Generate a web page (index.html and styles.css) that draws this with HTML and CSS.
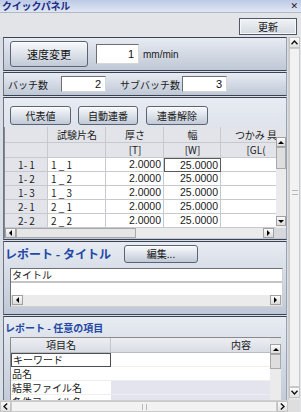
FILE: index.html
```html
<!DOCTYPE html>
<html lang="ja">
<head>
  <meta charset="UTF-8">
  <meta name="viewport" content="width=device-width, initial-scale=1.0">
  <title>クイックパネル</title>
  <link rel="stylesheet" href="styles.css">
</head>
<body>
<div class="window">
  <div class="titlebar">
    <span class="title">クイックパネル</span>
    <span class="close">✕</span>
  </div>
  <div class="toolbar">
    <button class="btn btn-update">更新</button>
  </div>

  <div class="frame">
    <div class="content">

      <!-- speed -->
      <div class="sec sec-speed">
        <button class="btn btn-speed">速度変更</button>
        <input class="num num-speed" type="text" value="1">
        <span class="unit">mm/min</span>
      </div>

      <!-- batch -->
      <div class="sec sec-batch">
        <span class="label label-batch">バッチ数</span>
        <input class="num" type="text" value="2">
        <span class="label label-sub">サブバッチ数</span>
        <input class="num" type="text" value="3">
      </div>

      <!-- specimens -->
      <div class="sec sec-spec">
        <div class="btn-row">
          <button class="btn btn-small w61">代表値</button>
          <button class="btn btn-small w60">自動連番</button>
          <button class="btn btn-small w62">連番解除</button>
        </div>
        <div class="spec-box">
          <div class="spec-main">
            <div class="spec-grid">
              <div class="c h"></div><div class="c h">試験片名</div><div class="c h">厚さ</div><div class="c h">幅</div><div class="c h">つかみ 具</div>
              <div class="c h"></div><div class="c h"></div><div class="c h">[T]</div><div class="c h">[W]</div><div class="c h">[GL(</div>
              <div class="c rh">1- 1</div><div class="c">1 _ 1</div><div class="c r">2.0000</div><div class="c r sel">25.0000</div><div class="c"></div>
              <div class="c rh">1- 2</div><div class="c">1 _ 2</div><div class="c r">2.0000</div><div class="c r">25.0000</div><div class="c"></div>
              <div class="c rh">1- 3</div><div class="c">1 _ 3</div><div class="c r">2.0000</div><div class="c r">25.0000</div><div class="c"></div>
              <div class="c rh">2- 1</div><div class="c">2 _ 1</div><div class="c r">2.0000</div><div class="c r">25.0000</div><div class="c"></div>
              <div class="c rh">2- 2</div><div class="c">2 _ 2</div><div class="c r">2.0000</div><div class="c r">25.0000</div><div class="c"></div>
            </div>
            <div class="vbar spec-vbar">
              <div class="vbar-top"></div>
              <div class="sb-btn"><span class="tri up"></span></div>
              <div class="sb-thumb v22"></div>
              <div class="sb-track"></div>
              <div class="sb-btn"><span class="tri down"></span></div>
              <div class="vbar-end"></div>
            </div>
          </div>
          <div class="hbar-row">
            <div class="hbar">
              <div class="sb-btn"><span class="tri left"></span></div>
              <div class="sb-thumb h-wide"></div>
              <div class="sb-track"></div>
              <div class="sb-btn"><span class="tri right"></span></div>
            </div>
            <div class="hbar-corner"></div>
          </div>
        </div>
      </div>

      <!-- report title -->
      <div class="sec sec-title">
        <div class="head-row">
          <span class="sec-head">レポート - タイトル</span>
          <button class="btn btn-edit">編集...</button>
        </div>
        <div class="textbox">
          <div class="tb-line">タイトル</div>
          <div class="tb-line tb-empty"></div>
          <div class="hbar tb-hbar">
            <div class="sb-btn"><span class="tri left"></span></div>
            <div class="sb-track"></div>
            <div class="sb-btn"><span class="tri right"></span></div>
          </div>
        </div>
      </div>

      <!-- report items -->
      <div class="sec sec-items">
        <div class="sec-head small">レポート - 任意の項目</div>
        <div class="items-box">
          <div class="items-grid">
            <div class="ic ih">項目名</div><div class="ic ih">内容</div>
            <div class="ic sel">キーワード</div><div class="ic"></div>
            <div class="ic">品名</div><div class="ic"></div>
            <div class="ic">結果ファイル名</div><div class="ic alt"></div>
            <div class="ic">条件ファイル名</div><div class="ic alt"></div>
          </div>
          <div class="vbar items-vbar">
            <div class="vbar-top short"></div>
            <div class="sb-btn"><span class="tri up"></span></div>
            <div class="sb-thumb v15"></div>
            <div class="sb-track"></div>
          </div>
        </div>
      </div>

    </div>

    <div class="outer-v">
      <div class="ob">
        <svg width="7" height="5" viewBox="0 0 7 5"><polyline points="0.5,4.2 3.5,1 6.5,4.2" fill="none" stroke="#111" stroke-width="1.4"/></svg>
      </div>
      <div class="ot v">
        <span class="grip-v"></span>
      </div>
      <div class="ob">
        <svg width="7" height="5" viewBox="0 0 7 5"><polyline points="0.5,0.8 3.5,4 6.5,0.8" fill="none" stroke="#111" stroke-width="1.4"/></svg>
      </div>
      <div class="ov-end"></div>
    </div>

    <div class="outer-h">
      <div class="ob">
        <svg width="5" height="7" viewBox="0 0 5 7"><polyline points="4.2,0.5 1,3.5 4.2,6.5" fill="none" stroke="#111" stroke-width="1.4"/></svg>
      </div>
      <div class="ot h">
        <span class="grip-h"></span>
      </div>
      <div class="ob">
        <svg width="5" height="7" viewBox="0 0 5 7"><polyline points="0.8,0.5 4,3.5 0.8,6.5" fill="none" stroke="#111" stroke-width="1.4"/></svg>
      </div>
    </div>

    <div class="outer-corner"></div>
  </div>
</div>
</body>
</html>
```

FILE: styles.css
```css
* {
  box-sizing: border-box;
}
body {
  margin: 0;
  width: 301px;
  height: 412px;
  overflow: hidden;
  font-family: "Noto Sans CJK JP", "DejaVu Sans", sans-serif;
  font-size: 10px;
  color: #1a1a1a;
  background: #e3e4e7;
}
.window {
  display: flex;
  flex-direction: column;
  height: 412px;
}

/* title + toolbar */
.titlebar {
  height: 13px;
  display: flex;
  align-items: center;
  justify-content: space-between;
  padding: 0 3px 0 2px;
  background: linear-gradient(#bccae6, #e0e7f3);
  border-bottom: 1px solid #b3b9c4;
}
.title {
  font-weight: bold;
  font-size: 10px;
  line-height: 12px;
  color: #1b2b86;
  letter-spacing: -0.2px;
}
.close {
  font-family: "DejaVu Sans", sans-serif;
  font-weight: bold;
  font-size: 9px;
  line-height: 9px;
}
.toolbar {
  height: 24px;
  display: flex;
  justify-content: flex-end;
  padding: 5px 4px 0 0;
  background: #e3e4e7;
}

/* buttons */
.btn {
  font-family: inherit;
  font-size: 10px;
  line-height: 1;
  padding: 0;
  color: #151515;
  border: 1px solid #5b6374;
  border-radius: 3px;
  background: linear-gradient(#f8f9fb, #e0e5ec 45%, #c0c9d6);
  box-shadow: inset 0 1px 0 #ffffff;
}
.btn-update {
  width: 58px;
  height: 17px;
  border-radius: 0;
  border-color: #4f5666;
  background: linear-gradient(#f1f3f6, #d3d8e0);
  box-shadow: inset 0 0 0 1px #f7f8fa;
}
.btn-speed {
  width: 78px;
  height: 26px;
  font-size: 11px;
}
.btn-small {
  height: 19px;
}
.w61 { width: 61px; }
.w60 { width: 60px; }
.w62 { width: 62px; }
.btn-edit {
  width: 74px;
  height: 18px;
}

/* frame with outer scrollbars */
.frame {
  display: grid;
  grid-template-columns: 288px 12px;
  grid-template-rows: 363px 12px;
  height: 375px;
}
.content {
  overflow: hidden;
  padding-left: 3px;
  background: #d9dde5;
  display: flex;
  flex-direction: column;
  gap: 1px;
}
.sec {
  flex: none;
  width: 284px;
  border-top: 1px solid #3b4353;
  border-bottom: 1px solid #3b4353;
  border-left: 1px solid #6d7584;
  border-right: 1px solid #9aa2b0;
  background: linear-gradient(#e7ebf2, #bfc8d6);
}

/* speed */
.sec-speed {
  height: 34px;
  display: flex;
  align-items: center;
  padding-left: 6px;
}
.num {
  width: 45px;
  height: 16px;
  padding: 0 4px;
  border: 1px solid;
  border-color: #6f6f6f #d6d6d6 #d6d6d6 #6f6f6f;
  background: #ffffff;
  text-align: right;
  font-family: "Liberation Sans", sans-serif;
  font-size: 11px;
  color: #111;
}
.num-speed {
  width: 43px;
  height: 20px;
  margin-left: 8px;
}
.unit {
  margin-left: 4px;
  font-family: "Liberation Sans", sans-serif;
  font-size: 10px;
}

/* batch */
.sec-batch {
  height: 24px;
  display: flex;
  align-items: center;
  padding-left: 4px;
}
.label-batch {
  width: 53px;
}
.label-sub {
  width: 62px;
  margin-left: 14px;
}

/* specimen table */
.sec-spec {
  height: 143px;
  padding-top: 8px;
}
.btn-row {
  display: flex;
  gap: 7px;
  padding-left: 6px;
  height: 19px;
}
.btn-row .w62 {
  margin-left: 1px;
}
.spec-box {
  margin-top: 2px;
  height: 111px;
  border-left: 1px solid #808896;
  background: #d6d8dd;
}
.spec-main {
  display: flex;
  height: 101px;
}
.spec-grid {
  width: 272px;
  overflow: hidden;
  display: grid;
  grid-template-columns: 43px 58px 58px 57px 70px;
  grid-template-rows: 16px 15px repeat(5, 14px);
  background: #ffffff;
}
.c {
  display: flex;
  align-items: center;
  padding: 0 2px 0 3px;
  white-space: nowrap;
  overflow: hidden;
  background: #ffffff;
  border-right: 1px solid #c6c9d0;
  border-bottom: 1px solid #c6c9d0;
  line-height: 1;
}
.c.h {
  justify-content: center;
  background: #e2e4ea;
}
.c.rh {
  justify-content: center;
  background: #e2e4ea;
}
.c.r {
  justify-content: flex-end;
  font-family: "Liberation Sans", sans-serif;
  font-size: 10.5px;
}
.c.sel {
  border: 1px solid #5a5a5a;
}

/* small scrollbars */
.vbar {
  display: flex;
  flex-direction: column;
  background: #ececec;
}
.spec-vbar {
  width: 10px;
}
.vbar-top {
  height: 10px;
  background: #e2e4ea;
}
.vbar-top.short {
  height: 6px;
}
.vbar-end {
  height: 2px;
}
.sb-btn {
  flex: none;
  width: 10px;
  height: 10px;
  display: flex;
  align-items: center;
  justify-content: center;
  border: 1px solid #a2a2a2;
  background: linear-gradient(#fbfbfb, #dcdcdc);
}
.sb-thumb {
  flex: none;
  border: 1px solid #a9a9a9;
  background: #dedede;
}
.sb-thumb.v22 { height: 22px; }
.sb-thumb.v15 { height: 15px; }
.sb-thumb.h-wide { width: 120px; background: #e6e6e6; }
.sb-track {
  flex: 1;
  background: #ebebeb;
}
.tri {
  width: 0;
  height: 0;
  border: 3px solid transparent;
}
.tri.up { border-top-width: 0; border-bottom-color: #000; }
.tri.down { border-bottom-width: 0; border-top-color: #000; }
.tri.left { border-left-width: 0; border-right-color: #000; }
.tri.right { border-right-width: 0; border-left-color: #000; }

.hbar-row {
  display: flex;
  height: 10px;
}
.hbar {
  flex: 1;
  display: flex;
  height: 10px;
  background: #ebebeb;
}
.hbar .sb-btn {
  width: 11px;
}
.hbar-corner {
  width: 12px;
  background: #d6d8dd;
}

/* report title */
.sec-title {
  height: 74px;
  padding: 3px 0 0 1px;
}
.head-row {
  display: flex;
  align-items: center;
  height: 18px;
}
.sec-head {
  font-weight: bold;
  font-size: 12px;
  line-height: 14px;
  color: #2448a6;
  white-space: nowrap;
}
.head-row .sec-head {
  width: 119px;
}
.sec-head.small {
  font-size: 10px;
  height: 14px;
  margin-bottom: 2px;
}
.textbox {
  margin: 5px 0 0 5px;
  width: 273px;
  height: 39px;
  border: 1px solid;
  border-color: #6f6f6f #d0d0d0 #d0d0d0 #6f6f6f;
  background: #ffffff;
  display: flex;
  flex-direction: column;
}
.tb-line {
  height: 14px;
  padding-left: 1px;
  line-height: 12px;
  border-bottom: 2px solid #c4c4c4;
}
.tb-empty {
  height: 12px;
  border-bottom: 0;
}
.tb-hbar {
  flex: none;
  height: 11px;
  padding: 0 1px;
  background: #e4e4e4;
}

/* report items */
.sec-items {
  flex: 1;
  padding: 4px 0 0 1px;
}
.items-box {
  margin-left: 5px;
  width: 271px;
  display: flex;
  border-left: 1px solid #8a8a8a;
  border-top: 1px solid #8a8a8a;
  background: #ffffff;
}
.items-grid {
  width: 260px;
  overflow: hidden;
  display: grid;
  grid-template-columns: 100px 260px;
  grid-template-rows: 15px repeat(4, 14px);
}
.ic {
  display: flex;
  align-items: center;
  padding-left: 1px;
  white-space: nowrap;
  overflow: hidden;
  line-height: 1;
  font-size: 10px;
  background: #ffffff;
  border-bottom: 1px solid #eeeeee;
}
.ic.ih {
  justify-content: center;
  background: linear-gradient(#eceef2, #d9dde4);
  border-right: 1px solid #c2c5cc;
  border-bottom: 1px solid #b8bcc4;
}
.ic.sel {
  border: 1px solid #4e4e4e;
}
.ic.alt {
  background: #e3e4ee;
}
.items-vbar {
  width: 11px;
}
.items-vbar .sb-btn {
  width: 11px;
}

/* outer scrollbars */
.outer-v {
  display: flex;
  flex-direction: column;
  background: #e6e6e6;
  border-left: 1px solid #cfcfcf;
}
.outer-h {
  display: flex;
  background: #e6e6e6;
  border-top: 1px solid #cfcfcf;
}
.ob {
  flex: none;
  width: 11px;
  height: 11px;
  display: flex;
  align-items: center;
  justify-content: center;
  background: linear-gradient(#fbfbfb, #e2e2e2);
  border: 1px solid #c4c4c4;
}
.ot {
  flex: 1;
  display: flex;
  align-items: center;
  justify-content: center;
  background: #f2f2f2;
  border: 1px solid #cacaca;
}
.ov-end {
  height: 2px;
}
.grip-v {
  width: 6px;
  height: 5px;
  border-top: 1px solid #b8b8b8;
  border-bottom: 1px solid #b8b8b8;
  margin-top: -50px;
}
.grip-h {
  width: 5px;
  height: 6px;
  border-left: 1px solid #b8b8b8;
  border-right: 1px solid #b8b8b8;
}
.outer-corner {
  background: #dedede;
}
```
